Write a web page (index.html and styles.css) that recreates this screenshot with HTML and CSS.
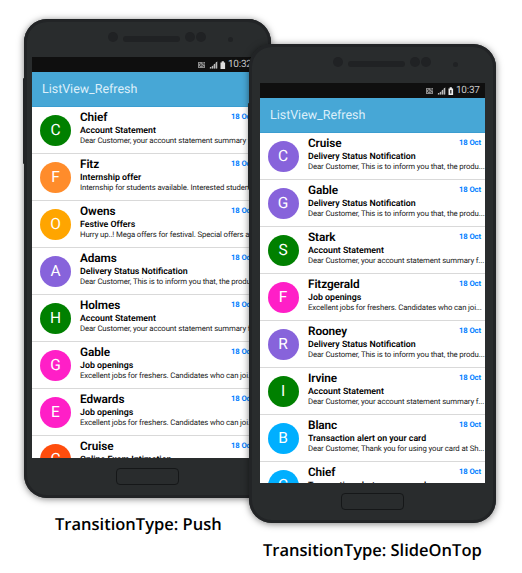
FILE: index.html
```
<!DOCTYPE html>
<html lang="en">
<head>
<meta charset="utf-8">
<title>ListView_Refresh</title>
<link rel="stylesheet" href="styles.css">
</head>
<body>
<main class="stage">
  <figure class="device device-push">
    <div class="phone">
      <div class="speaker"><i class="dot"></i><i class="slot"></i><i class="dot"></i><i class="dot"></i><i class="led"></i></div>
      <div class="screen">
        <div class="status">
          <svg class="status-icons" viewBox="0 0 30 10"><rect x="1" y="2" width="7" height="6" fill="#8b8b8b"/><path d="M2 3l5 4M2 7l2-2M5 3h2v2" stroke="#222" stroke-width=".8" fill="none"/><path d="M12.500 8.500l8-7.500v7.500z" fill="#555"/><path d="M13.500 8.500V7M15.500 8.500V6M17.500 8.500V4M19.500 8.500V2" stroke="#bbb" stroke-width="1.2"/><path d="M23.500 2.500h1.200V1.200h2.200v1.300h1.200v6.500h-4.600z" fill="#ddd"/></svg>
          <span class="clock">10:32</span>
        </div>
        <header class="appbar">ListView_Refresh</header>
        <ul class="list">
          <li class="row"><span class="avatar green">C</span><div class="mail"><b class="name">Chief</b><b class="subject">Account Statement</b><p class="text">Dear Customer, your account statement summary f...</p></div><time class="date">18 Oct</time></li>
          <li class="row"><span class="avatar coral">F</span><div class="mail"><b class="name">Fitz</b><b class="subject">Internship offer</b><p class="text">Internship for students available. Interested studen...</p></div><time class="date">18 Oct</time></li>
          <li class="row"><span class="avatar orange">O</span><div class="mail"><b class="name">Owens</b><b class="subject">Festive Offers</b><p class="text">Hurry up..! Mega offers for festival. Special offers a...</p></div><time class="date">18 Oct</time></li>
          <li class="row"><span class="avatar purple">A</span><div class="mail"><b class="name">Adams</b><b class="subject">Delivery Status Notification</b><p class="text">Dear Customer, This is to inform you that, the produ...</p></div><time class="date">18 Oct</time></li>
          <li class="row"><span class="avatar green">H</span><div class="mail"><b class="name">Holmes</b><b class="subject">Account Statement</b><p class="text">Dear Customer, your account statement summary f...</p></div><time class="date">18 Oct</time></li>
          <li class="row"><span class="avatar pink">G</span><div class="mail"><b class="name">Gable</b><b class="subject">Job openings</b><p class="text">Excellent jobs for freshers. Candidates who can joi...</p></div><time class="date">18 Oct</time></li>
          <li class="row"><span class="avatar pink">E</span><div class="mail"><b class="name">Edwards</b><b class="subject">Job openings</b><p class="text">Excellent jobs for freshers. Candidates who can joi...</p></div><time class="date">18 Oct</time></li>
          <li class="row"><span class="avatar red">C</span><div class="mail"><b class="name">Cruise</b><b class="subject">Online Exam Intimation</b></div><time class="date">18 Oct</time></li>
        </ul>
      </div>
      <div class="home"></div>
    </div>
    <figcaption class="caption">TransitionType: Push</figcaption>
  </figure>
  <figure class="device device-slide">
    <div class="phone">
      <div class="speaker"><i class="dot"></i><i class="slot"></i><i class="dot"></i><i class="dot"></i><i class="led"></i></div>
      <div class="screen">
        <div class="status">
          <svg class="status-icons" viewBox="0 0 30 10"><rect x="1" y="2" width="7" height="6" fill="#8b8b8b"/><path d="M2 3l5 4M2 7l2-2M5 3h2v2" stroke="#222" stroke-width=".8" fill="none"/><path d="M12.500 8.500l8-7.500v7.500z" fill="#555"/><path d="M13.500 8.500V7M15.500 8.500V6M17.500 8.500V4M19.500 8.500V2" stroke="#bbb" stroke-width="1.2"/><path d="M23.500 2.500h1.200V1.200h2.200v1.300h1.200v6.500h-4.600z" fill="#eee"/><path d="M25.800 4v3.500" stroke="#222" stroke-width="1.200"/></svg>
          <span class="clock">10:37</span>
        </div>
        <header class="appbar">ListView_Refresh</header>
        <ul class="list">
          <li class="row"><span class="avatar purple">C</span><div class="mail"><b class="name">Cruise</b><b class="subject">Delivery Status Notification</b><p class="text">Dear Customer, This is to inform you that, the produ...</p></div><time class="date">18 Oct</time></li>
          <li class="row"><span class="avatar purple">G</span><div class="mail"><b class="name">Gable</b><b class="subject">Delivery Status Notification</b><p class="text">Dear Customer, This is to inform you that, the produ...</p></div><time class="date">18 Oct</time></li>
          <li class="row"><span class="avatar green">S</span><div class="mail"><b class="name">Stark</b><b class="subject">Account Statement</b><p class="text">Dear Customer, your account statement summary f...</p></div><time class="date">18 Oct</time></li>
          <li class="row"><span class="avatar pink">F</span><div class="mail"><b class="name">Fitzgerald</b><b class="subject">Job openings</b><p class="text">Excellent jobs for freshers. Candidates who can joi...</p></div><time class="date">18 Oct</time></li>
          <li class="row"><span class="avatar purple">R</span><div class="mail"><b class="name">Rooney</b><b class="subject">Delivery Status Notification</b><p class="text">Dear Customer, This is to inform you that, the produ...</p></div><time class="date">18 Oct</time></li>
          <li class="row"><span class="avatar green">I</span><div class="mail"><b class="name">Irvine</b><b class="subject">Account Statement</b><p class="text">Dear Customer, your account statement summary f...</p></div><time class="date">18 Oct</time></li>
          <li class="row"><span class="avatar blue">B</span><div class="mail"><b class="name">Blanc</b><b class="subject">Transaction alert on your card</b><p class="text">Dear Customer, Thank you for using your card at Sh...</p></div><time class="date">18 Oct</time></li>
          <li class="row"><span class="avatar blue">C</span><div class="mail"><b class="name">Chief</b><b class="subject">Transaction alert on your card</b></div><time class="date">18 Oct</time></li>
        </ul>
      </div>
      <div class="home"></div>
    </div>
    <figcaption class="caption">TransitionType: SlideOnTop</figcaption>
  </figure>
</main>
</body>
</html>
```
FILE: styles.css
```
* { box-sizing: border-box; }
body { margin: 0; background: #fff; font-family: Roboto, "Liberation Sans", sans-serif; text-rendering: geometricPrecision; }
.stage { display: flex; align-items: flex-start; width: 522px; height: 573px; padding: 19px 0 0 24px; overflow: hidden; }
.device { margin: 0; width: 247px; flex: none; }
.device-slide { margin: 25px 0 0 -22px; position: relative; }
.phone {
  position: relative;
  display: flex; flex-direction: column; align-items: flex-start;
  width: 247px; height: 479px;
  padding-left: 8px;
  background: #292c2d;
  border-radius: 23px;
  box-shadow: inset 0 0 0 3px #222426, 0 1px 7px rgba(0,0,0,.5);
}
.device-slide .phone { padding-left: 11px; }
.phone::before {
  content: ""; position: absolute; left: -1px; top: 59px;
  width: 3px; height: 86px; background: #222426; border-radius: 1px;
}
.speaker { display: flex; align-items: center; width: 132px; height: 38px; margin-left: 76px; padding-bottom: 2px; flex: none; }
.device-slide .speaker { height: 39px; margin-left: 73px; padding-bottom: 3px; }
.speaker i { display: block; background: #202224; flex: none; }
.speaker .dot { width: 10px; height: 10px; border-radius: 50%; margin-right: 1px; }
.speaker .slot { width: 57px; height: 6px; border-radius: 3px; margin: 4px 5px 0 4px; }
.speaker .led { width: 5px; height: 5px; border-radius: 50%; margin: 5px 0 0 21px; }
.screen { display: flex; flex-direction: column; width: 225px; height: 401px; overflow: hidden; background: #fff; flex: none; }
.device-slide .screen { height: 400px; }
.status { display: flex; justify-content: flex-end; align-items: center; height: 15px; padding-right: 5px; background: #0f0f0f; flex: none; }
.status-icons { width: 30px; height: 10px; margin-right: 1px; }
.clock { font-size: 10px; line-height: 17px; color: #c9c9c9; width: 24px; white-space: nowrap; letter-spacing: -.25px; }
.appbar { height: 35px; padding-left: 10px; background: #47a7d6; border-bottom: 1px solid #3b9dd0; color: #dceffa; font-size: 12.500px; line-height: 36px; letter-spacing: -.03px; flex: none; }
.list { list-style: none; margin: 0; padding: 0; }
.row { display: flex; height: 47px; padding: 0 4px 0 8px; border-bottom: 1px solid #d9d9d9; }
.avatar { width: 31px; height: 31px; margin: 8px 9px 0 0; border-radius: 50%; color: #fff; font-size: 15.500px; line-height: 31px; text-align: center; flex: none; }
.device-slide .avatar { margin: 7.500px 9.500px 0 -.5px; }
.green { background: #008000; }
.coral { background: #ff8c2b; }
.orange { background: #ffa500; }
.purple { background: #8763db; }
.pink { background: #ff1fc7; }
.red { background: #ff4d0d; }
.blue { background: #00afff; }
.mail { width: 0; flex: 1; white-space: nowrap; color: #000; }
.name, .subject { display: block; font-weight: 600; }
.name { font-size: 11.800px; line-height: 14px; margin-top: 3px; letter-spacing: -.1px; }
.subject { font-size: 8.800px; line-height: 12px; margin-top: 1px; }
.text { margin: -1px 0 0; font-size: 7.800px; line-height: 9px; color: #222; letter-spacing: -.13px; }
.date { font-size: 7.700px; line-height: 10px; font-weight: 700; letter-spacing: -.1px; color: #0080ff; margin-top: 5px; }
.home { width: 63px; height: 17px; margin: 10px 0 0 84px; border: 1px solid #151718; border-radius: 4px; flex: none; }
.device-slide .home { margin: 10px 0 0 81px; }
.caption { font-family: "Open Sans", "Noto Sans", sans-serif; font-weight: 600; font-size: 16.500px; line-height: 20px; color: #000; white-space: nowrap; margin: 16px 0 0 31px; }
.device-slide .caption { margin: 17px 0 0 14px; }
```
